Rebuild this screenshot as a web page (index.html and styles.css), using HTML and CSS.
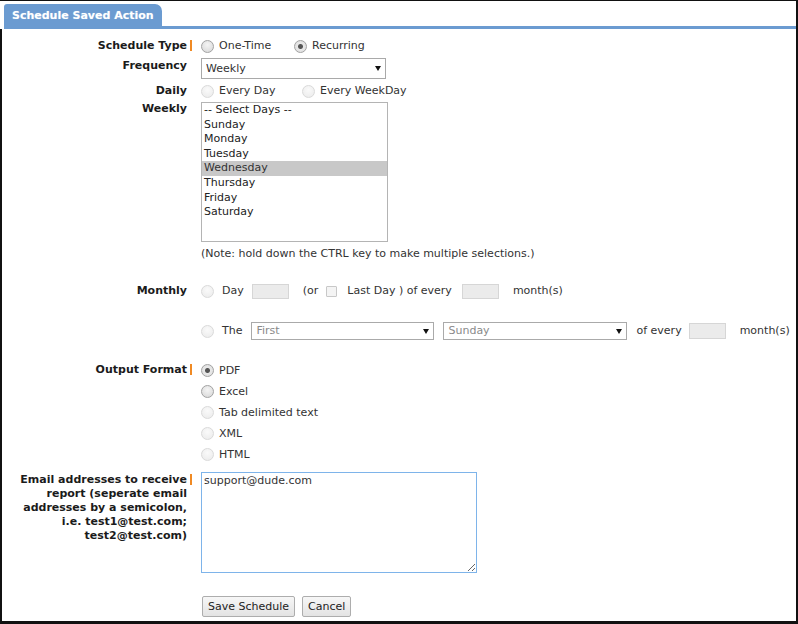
FILE: index.html
```html
<!DOCTYPE html>
<html lang="en">
<head>
    <meta charset="UTF-8">
    <title>Schedule Saved Action</title>
    <link rel="stylesheet" href="styles.css">
</head>
<body>
    <div class="frame">
        <div class="tabbar">
            <div class="tab">Schedule Saved Action</div>
        </div>

        <form class="form">
            <div class="row row-type">
                <label class="lbl req">Schedule Type</label>
                <div class="ctl opts">
                    <label class="opt w-type"><input type="radio" name="stype" class="radio">One-Time</label>
                    <label class="opt"><input type="radio" name="stype" class="radio" checked>Recurring</label>
                </div>
            </div>

            <div class="row row-freq">
                <label class="lbl">Frequency</label>
                <div class="ctl">
                    <span class="sel">
                        <select class="select freq">
                            <option>Daily</option>
                            <option selected>Weekly</option>
                            <option>Monthly</option>
                        </select>
                    </span>
                </div>
            </div>

            <div class="row row-daily">
                <label class="lbl">Daily</label>
                <div class="ctl opts">
                    <label class="opt w-daily"><input type="radio" name="daily" class="radio" disabled>Every Day</label>
                    <label class="opt"><input type="radio" name="daily" class="radio" disabled>Every WeekDay</label>
                </div>
            </div>

            <div class="row row-weekly">
                <label class="lbl">Weekly</label>
                <div class="ctl">
                    <div class="listbox">
                        <div class="item">-- Select Days --</div>
                        <div class="item">Sunday</div>
                        <div class="item">Monday</div>
                        <div class="item">Tuesday</div>
                        <div class="item selected">Wednesday</div>
                        <div class="item">Thursday</div>
                        <div class="item">Friday</div>
                        <div class="item">Saturday</div>
                    </div>
                    <div class="note">(Note: hold down the CTRL key to make multiple selections.)</div>
                </div>
            </div>

            <div class="row row-month1">
                <label class="lbl">Monthly</label>
                <div class="ctl opts">
                    <input type="radio" name="monthly" class="radio m-radio" disabled>
                    <span class="txt">Day</span>
                    <input type="text" class="num" disabled>
                    <span class="txt gap-l">(or</span>
                    <input type="checkbox" class="check" disabled>
                    <span class="txt">Last Day ) of every</span>
                    <input type="text" class="num num-every" disabled>
                    <span class="txt gap-l">month(s)</span>
                </div>
            </div>

            <div class="row row-month2">
                <span class="lbl"></span>
                <div class="ctl opts">
                    <input type="radio" name="monthly" class="radio m-radio" disabled>
                    <span class="txt">The</span>
                    <span class="sel sel-off">
                        <select class="select nth" disabled>
                            <option>First</option>
                        </select>
                    </span>
                    <span class="sel sel-off">
                        <select class="select wday" disabled>
                            <option>Sunday</option>
                        </select>
                    </span>
                    <span class="txt">of every</span>
                    <input type="text" class="num num-wide" disabled>
                    <span class="txt gap-l">month(s)</span>
                </div>
            </div>

            <div class="row row-output">
                <label class="lbl req">Output Format</label>
                <div class="ctl stack">
                    <label class="opt line"><input type="radio" name="fmt" class="radio" checked>PDF</label>
                    <label class="opt line"><input type="radio" name="fmt" class="radio">Excel</label>
                    <label class="opt line"><input type="radio" name="fmt" class="radio" disabled>Tab delimited text</label>
                    <label class="opt line"><input type="radio" name="fmt" class="radio" disabled>XML</label>
                    <label class="opt line"><input type="radio" name="fmt" class="radio" disabled>HTML</label>
                </div>
            </div>

            <div class="row row-email">
                <label class="lbl req" for="emails">Email addresses to receive<br>report (seperate email<br>addresses by a semicolon,<br>i.e. test1@test.com;<br>test2@test.com)</label>
                <div class="ctl">
                    <textarea id="emails" class="emails">support@dude.com</textarea>
                </div>
            </div>

            <div class="row row-buttons">
                <span class="lbl"></span>
                <div class="ctl buttons">
                    <button type="button" class="btn">Save Schedule</button>
                    <button type="button" class="btn">Cancel</button>
                </div>
            </div>
        </form>
    </div>

    <script>
        // put the caret after the address, like the user just typed it
        const emails = document.getElementById('emails');
        emails.focus();
        emails.setSelectionRange(emails.value.length, emails.value.length);
    </script>
</body>
</html>
```

FILE: styles.css
```css
html, body {
    margin: 0;
    padding: 0;
    background: #fff;
}

body {
    font-family: "DejaVu Sans", Verdana, sans-serif;
    font-size: 11px;
    line-height: 14px;
    color: #333;
}

.frame {
    width: 798px;
    height: 624px;
    box-sizing: border-box;
    border-top: 1px solid #111;
    border-right: 2px solid #111;
    border-bottom: 3px solid #111;
    display: flex;
    flex-direction: column;
}

/* Tab header */
.tabbar {
    margin: 3px 0 0 4px;
    border-bottom: 3px solid #6b9bd1;
}

.tab {
    width: 158px;
    height: 22px;
    box-sizing: border-box;
    padding-left: 8px;
    line-height: 24px;
    background: #6b9bd1;
    color: #fff;
    font-weight: bold;
    border-radius: 3px 7px 0 0;
    text-shadow: 0 0 1px rgba(255, 255, 255, 0.4);
    overflow: hidden;
}

/* Form */
.form {
    flex: 1;
    border-left: 2px solid #111;
    padding-top: 7px;
}

.row {
    display: flex;
    align-items: flex-start;
}

.lbl {
    width: 185px;
    flex: none;
    text-align: right;
    font-weight: bold;
    color: #1b1b1b;
    position: relative;
    padding-top: 3px;
}

.req::after {
    content: "";
    position: absolute;
    right: -5px;
    top: 4px;
    width: 2px;
    height: 11px;
    background: #f08a24;
}

.ctl {
    margin-left: 14px;
}

.opts {
    display: flex;
    align-items: center;
    height: 20px;
}

.opt {
    display: flex;
    align-items: center;
    height: 20px;
}

.w-type {
    width: 93px;
}

.w-daily {
    width: 101px;
}

.stack {
    display: flex;
    flex-direction: column;
}

.opt.line {
    height: 21px;
}

/* Radios / checkbox */
.radio {
    appearance: none;
    -webkit-appearance: none;
    width: 13px;
    height: 13px;
    margin: 0 5px 0 0;
    border: 1px solid #a2a2a2;
    border-radius: 50%;
    background: radial-gradient(circle at 50% 35%, #f4f4f4 0, #d6d6d6 100%);
    box-sizing: border-box;
    flex: none;
}

.radio:checked {
    background: radial-gradient(circle, #555 0, #555 2px, #e8e8e8 3px, #dcdcdc 100%);
}

.radio:disabled {
    border-color: #dadada;
    background: radial-gradient(circle at 50% 35%, #fafafa 0, #eaeaea 100%);
}

.m-radio {
    margin-right: 8px;
}

.check {
    appearance: none;
    -webkit-appearance: none;
    width: 11px;
    height: 11px;
    margin: 0 10px 0 8px;
    border: 1px solid #c8c8c8;
    border-radius: 1px;
    background: #f4f4f4;
    box-sizing: border-box;
}

.txt {
    white-space: nowrap;
}

.gap-l {
    margin-left: 14px;
}

/* Selects */
.sel {
    position: relative;
    display: inline-block;
}

.sel::after {
    content: "";
    position: absolute;
    right: 5px;
    top: 8px;
    border-left: 3px solid transparent;
    border-right: 3px solid transparent;
    border-top: 5px solid #111;
    pointer-events: none;
}

.select {
    appearance: none;
    -webkit-appearance: none;
    display: block;
    margin: 0;
    padding: 0 0 0 4px;
    font: inherit;
    color: #333;
    background: #fff;
    border: 1px solid #a9a9a9;
    border-radius: 0;
    box-sizing: border-box;
}

.freq {
    width: 185px;
    height: 21px;
}

.sel-off::after {
    top: 7px;
}

.sel-off .select {
    height: 18px;
    color: #8a8a8a;
    border-color: #aaa;
    opacity: 1;
}

.nth {
    width: 183px;
}

.wday {
    width: 184px;
}

.row-month2 .sel {
    margin-left: 9px;
}

.row-month2 .sel + .sel {
    margin-left: 9px;
}

.row-month2 .sel + .txt {
    margin-left: 9px;
}

/* Small disabled inputs */
.num {
    width: 37px;
    height: 15px;
    margin: 0 0 0 8px;
    padding: 0;
    border: 1px solid #d6d6d6;
    background: #ebebeb;
    box-sizing: border-box;
}

.num-every {
    margin-left: 10px;
}

.num-wide {
    height: 16px;
    margin-left: 7px;
}

/* Weekly list */
.listbox {
    width: 187px;
    height: 140px;
    box-sizing: border-box;
    border: 1px solid #b4b4b4;
    color: #222;
}

.item {
    height: 14.6px;
    line-height: 14.6px;
    padding-left: 2px;
}

.item.selected {
    background: #c8c8c8;
    color: #333;
}

.note {
    margin-top: 5px;
    color: #333;
}

/* Email */
.emails {
    display: block;
    width: 276px;
    height: 101px;
    margin: 0;
    padding: 1px 2px;
    box-sizing: border-box;
    font: inherit;
    color: #333;
    border: 1px solid #7eb4ea;
    resize: both;
}

.emails:focus {
    outline: none;
}

/* Buttons */
.buttons {
    display: flex;
    gap: 7px;
    margin-left: 15px;
}

.btn {
    height: 21px;
    padding: 0 5px;
    font: inherit;
    color: #222;
    background: linear-gradient(#f7f7f7, #e3e3e3);
    border: 1px solid #adadad;
    border-radius: 2px;
}

/* Row spacing */
.row-freq { margin-top: 2px; }
.row-freq .lbl { padding-top: 1px; }
.row-daily { margin-top: 2px; }
.row-daily .lbl { padding-top: 3px; }
.row-weekly { margin-top: 1px; }
.row-weekly .lbl { padding-top: 0; }
.row-month1 { margin-top: 20px; }
.row-month2 { margin-top: 20px; }
.row-output { margin-top: 19px; }
.row-email { margin-top: 7px; }
.row-email .lbl { padding-top: 1px; }
.row-email .req::after { top: 2px; }
.row-buttons { margin-top: 23px; }
```
